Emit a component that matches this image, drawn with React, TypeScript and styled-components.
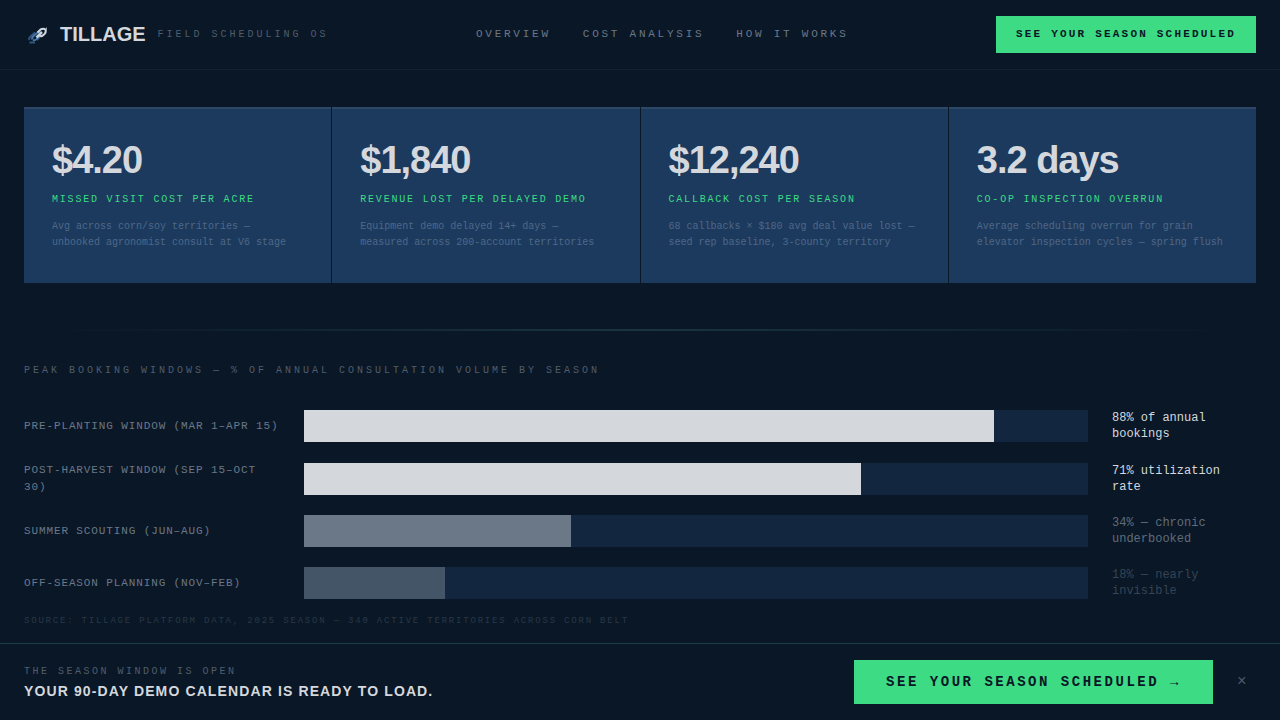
import React, { useState } from "react";
import styled, { createGlobalStyle } from "styled-components";

const mono = `"Liberation Mono", "Courier New", monospace`;
const sans = `"Liberation Sans", Arial, sans-serif`;

const GlobalStyle = createGlobalStyle`
  *, *::before, *::after { box-sizing: border-box; }
  body {
    margin: 0;
    background: #0a1726;
    color: #d4d8dd;
    font-family: ${mono};
  }
  h1, h2, p { margin: 0; font-weight: normal; }
`;

const Page = styled.div`
  min-height: 100vh;
  display: flex;
  flex-direction: column;
`;

const Header = styled.header`
  display: flex;
  align-items: center;
  justify-content: space-between;
  padding: 16px 24px;
  border-bottom: 1px solid #132230;
`;

const Brand = styled.a`
  display: flex;
  align-items: center;
  gap: 12px;
  color: inherit;
  text-decoration: none;
`;

const BrandMark = styled.span`
  display: flex;
  align-items: center;
  gap: 8px;
  padding-bottom: 2px;
`;

const BrandName = styled.span`
  font: bold 20px/22px ${sans};
`;

const Eyebrow = styled.span<{ $tracking?: string }>`
  font-size: 10px;
  line-height: 12px;
  letter-spacing: ${(p) => p.$tracking ?? "3px"};
  color: #505d6c;
  text-transform: uppercase;
`;

const Nav = styled.nav`
  display: flex;
  gap: 32px;
`;

const NavLink = styled.a`
  font-size: 11px;
  line-height: 13px;
  letter-spacing: 0.25em;
  color: #6b7888;
  text-transform: uppercase;
  text-decoration: none;
`;

const Cta = styled.button<{ $large?: boolean }>`
  border: 0;
  background: #3ddc84;
  color: #0a1726;
  font-family: ${mono};
  font-weight: bold;
  font-size: ${(p) => (p.$large ? "14px" : "11px")};
  line-height: ${(p) => (p.$large ? "16px" : "13px")};
  letter-spacing: ${(p) => (p.$large ? "0.18em" : "0.2em")};
  padding: ${(p) => (p.$large ? "14px 32px" : "12px 20px")};
  text-transform: uppercase;
  white-space: nowrap;
  cursor: pointer;
`;

const Main = styled.main`
  display: flex;
  flex-direction: column;
  padding: 37px 24px 12px;
`;

const Stats = styled.section`
  display: grid;
  grid-template-columns: repeat(4, 1fr);
  gap: 1px;
`;

const StatCard = styled.article`
  background: #1c3a5e;
  border-top: 2px solid #2d4866;
  padding: 31px 28px 32px;
`;

const StatValue = styled.h2`
  font: bold 38px/40px ${sans};
  letter-spacing: -1px;
`;

const StatLabel = styled.p`
  margin-top: 14px;
  font-size: 10px;
  line-height: 12px;
  letter-spacing: 0.18em;
  color: #3ddc84;
  text-transform: uppercase;
`;

const StatNote = styled.p`
  margin-top: 13px;
  font-size: 10px;
  line-height: 16px;
  color: #4f6887;
`;

const Divider = styled.hr`
  width: 100%;
  height: 2px;
  margin: 46px 0 34px;
  border: 0;
  background: linear-gradient(90deg, transparent 2%, #1a3440 50%, transparent 98%);
`;

const Chart = styled.section`
  display: flex;
  flex-direction: column;
`;

const Rows = styled.div`
  display: flex;
  flex-direction: column;
  gap: 20px;
  margin: 33px 0 16px;
`;

const Row = styled.div`
  display: grid;
  grid-template-columns: 256px 1fr 144px;
  column-gap: 24px;
  align-items: center;
`;

const RowLabel = styled.span`
  font-size: 11px;
  line-height: 1.5;
  letter-spacing: 0.08em;
  color: #6b7888;
  text-transform: uppercase;
`;

const Track = styled.div`
  height: 32px;
  background: #13263f;
`;

const Fill = styled.div<{ $color: string }>`
  height: 100%;
  background: ${(p) => p.$color};
`;

const RowValue = styled.span<{ $color: string }>`
  font-size: 12px;
  line-height: 16px;
  color: ${(p) => p.$color};
`;

const Source = styled.p`
  font-size: 9px;
  line-height: 12px;
  letter-spacing: 0.2em;
  color: #293746;
  text-transform: uppercase;
`;

const Banner = styled.footer`
  margin-top: auto;
  display: flex;
  align-items: center;
  justify-content: space-between;
  padding: 16px 24px;
  border-top: 1px solid #1a3c46;
`;

const BannerText = styled.div`
  display: flex;
  flex-direction: column;
  gap: 5px;
`;

const BannerTitle = styled.p`
  font: bold 14px/16px ${sans};
  letter-spacing: 0.08em;
  text-transform: uppercase;
`;

const BannerActions = styled.div`
  display: flex;
  align-items: center;
  gap: 16px;
`;

const Close = styled.button`
  width: 27px;
  border: 0;
  background: none;
  padding: 8px 10px 8px 8px;
  font: 16px/16px ${mono};
  color: #4d5a69;
  cursor: pointer;
`;

const stats = [
  { value: "$4.20", label: "Missed visit cost per acre", note: "Avg across corn/soy territories — unbooked agronomist consult at V6 stage" },
  { value: "$1,840", label: "Revenue lost per delayed demo", note: "Equipment demo delayed 14+ days — measured across 200-account territories" },
  { value: "$12,240", label: "Callback cost per season", note: "68 callbacks × $180 avg deal value lost — seed rep baseline, 3-county territory" },
  { value: "3.2 days", label: "Co-op inspection overrun", note: "Average scheduling overrun for grain elevator inspection cycles — spring flush" },
];

const windows = [
  { label: "Pre-planting window (Mar 1–Apr 15)", share: 88, value: "88% of annual bookings", fill: "#d4d8dd", text: "#d4d8dd" },
  { label: "Post-harvest window (Sep 15–Oct 30)", share: 71, value: "71% utilization rate", fill: "#d4d8dd", text: "#d4d8dd" },
  { label: "Summer scouting (Jun–Aug)", share: 34, value: "34% — chronic underbooked", fill: "#6b7888", text: "#5f6c7b" },
  { label: "Off-season planning (Nov–Feb)", share: 18, value: "18% — nearly invisible", fill: "#455568", text: "#364454" },
];

function LinkIcon() {
  return (
    <svg width="28" height="28" viewBox="0 0 28 28" fill="none" aria-hidden="true">
      <path d="M5.500 22.500h5.500" stroke="#2c5a78" strokeWidth="2" />
      <path d="M11 12.500 6.500 16.500q-2 2-1 3.500M13 20l2.500-3" stroke="#2f5580" strokeWidth="2" />
      <path d="M8.500 19.500q-1-2 1-3.500l4-3.500q2-1 2.500 0M9 20q2 1 3.500-1l3-3" stroke="#4a76a6" strokeWidth="2" />
      <path d="M12.500 17.500 18 12" stroke="#c6d2de" strokeWidth="2.500" />
      <path d="M13.500 12.500 16.500 9.500q3-1.500 5 0 1 3-1.500 5l-2 1.500q-1.500.5-2.500-.5" stroke="#d0d8e0" strokeWidth="2" />
      <path d="M22.500 7.500v3" stroke="#8fa0b0" strokeWidth="1" />
    </svg>
  );
}

export default function App() {
  const [open, setOpen] = useState(true);
  return (
    <>
      <GlobalStyle />
      <Page>
        <Header>
          <Brand href="#">
            <BrandMark>
              <LinkIcon />
              <BrandName>TILLAGE</BrandName>
            </BrandMark>
            <Eyebrow>Field Scheduling OS</Eyebrow>
          </Brand>
          <Nav>
            <NavLink href="#overview">Overview</NavLink>
            <NavLink href="#cost">Cost Analysis</NavLink>
            <NavLink href="#how">How It Works</NavLink>
          </Nav>
          <Cta type="button">See your season scheduled</Cta>
        </Header>
        <Main>
          <Stats id="cost">
            {stats.map((s) => (
              <StatCard key={s.label}>
                <StatValue>{s.value}</StatValue>
                <StatLabel>{s.label}</StatLabel>
                <StatNote>{s.note}</StatNote>
              </StatCard>
            ))}
          </Stats>
          <Divider />
          <Chart>
            <Eyebrow as="h2">Peak booking windows — % of annual consultation volume by season</Eyebrow>
            <Rows>
              {windows.map((w) => (
                <Row key={w.label}>
                  <RowLabel>{w.label}</RowLabel>
                  <Track>
                    <Fill $color={w.fill} style={{ width: `${w.share}%` }} />
                  </Track>
                  <RowValue $color={w.text}>{w.value}</RowValue>
                </Row>
              ))}
            </Rows>
            <Source>Source: Tillage platform data, 2025 season — 340 active territories across corn belt</Source>
          </Chart>
        </Main>
        {open && (
          <Banner>
            <BannerText>
              <Eyebrow $tracking="0.25em">The season window is open</Eyebrow>
              <BannerTitle>Your 90-day demo calendar is ready to load.</BannerTitle>
            </BannerText>
            <BannerActions>
              <Cta type="button" $large>See your season scheduled →</Cta>
              <Close type="button" aria-label="Dismiss" onClick={() => setOpen(false)}>×</Close>
            </BannerActions>
          </Banner>
        )}
      </Page>
    </>
  );
}
